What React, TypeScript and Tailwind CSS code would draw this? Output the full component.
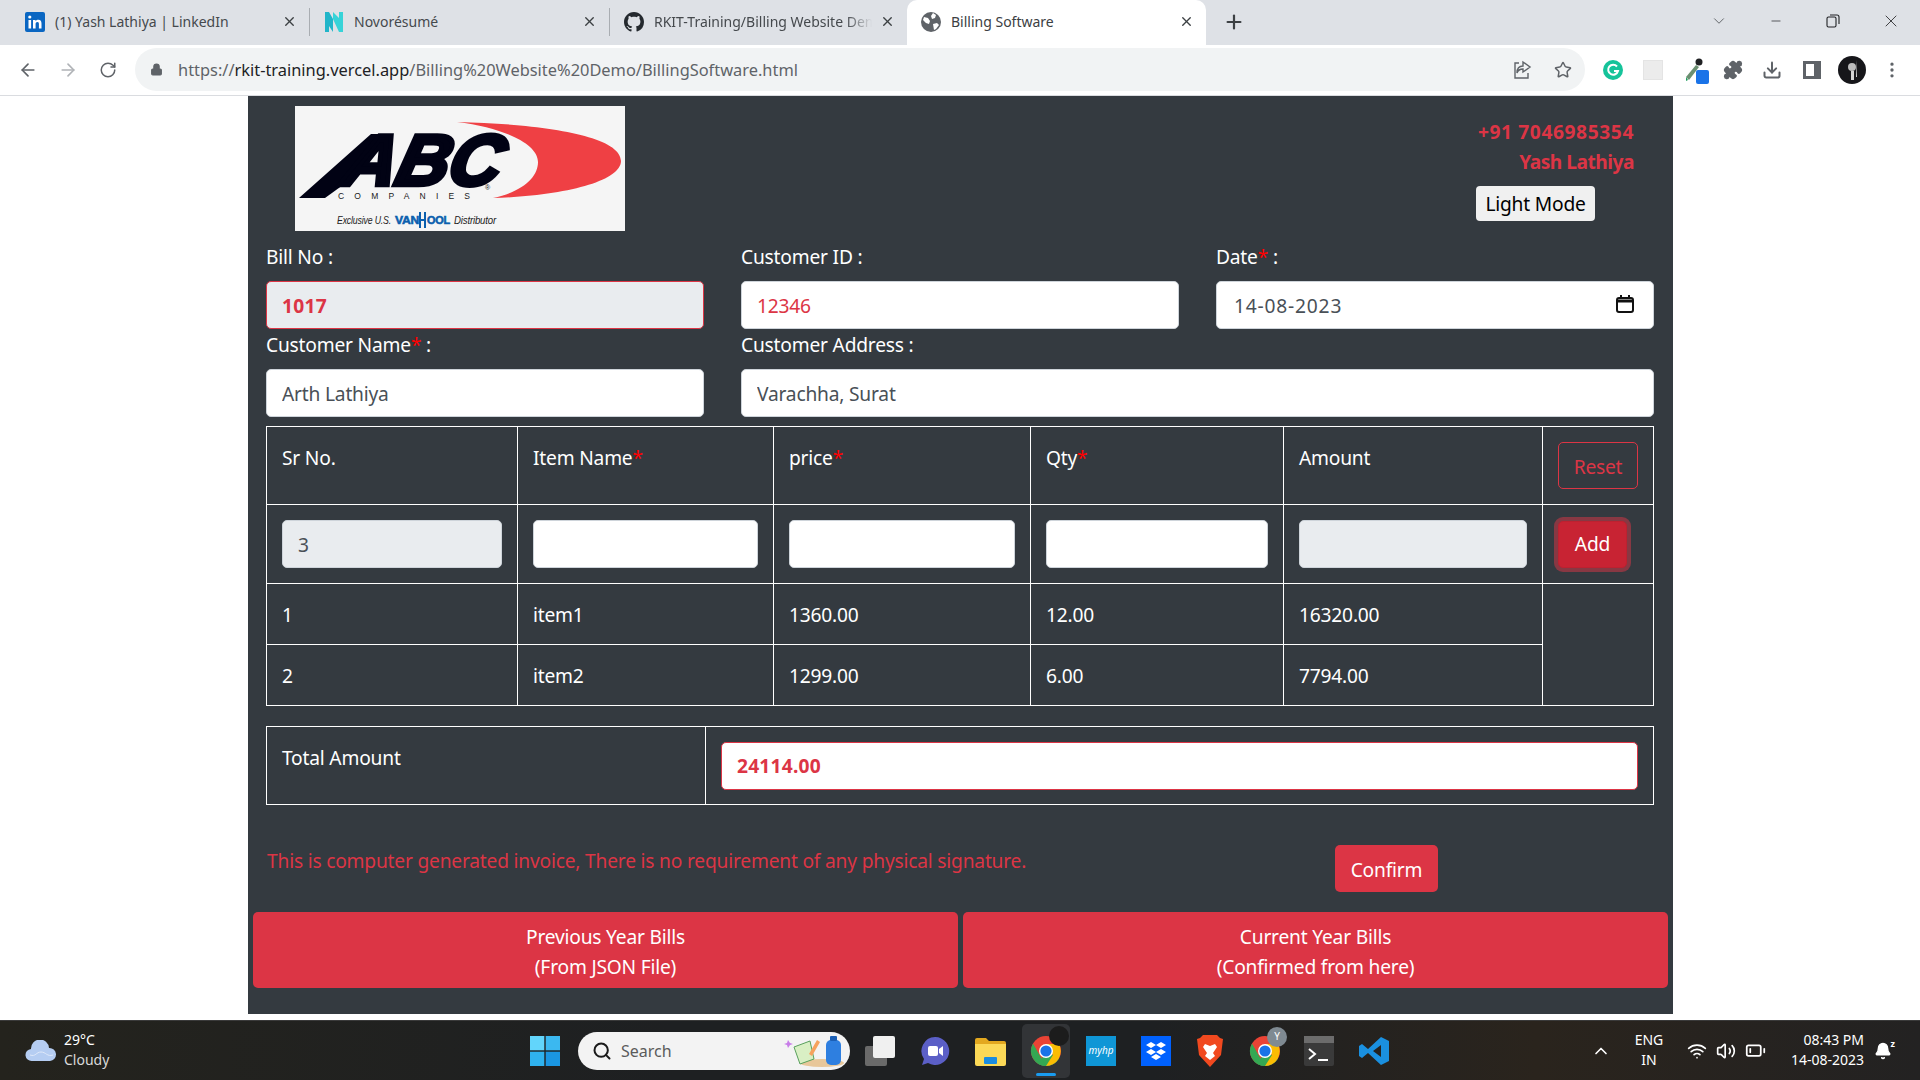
import React from 'react';
import { X, Plus, ArrowLeft, ArrowRight, RotateCw, Lock, Star, Puzzle, Download, EllipsisVertical, Minus, ChevronDown, ChevronUp, Search, Wifi, Volume2, BatteryLow, Bell } from 'lucide-react';

const FONT = "font-['Noto_Sans','Open_Sans',sans-serif]";

const inputClass = 'h-[48px] w-full rounded-[5px] border border-[#ced4da] bg-white px-[15px] text-[19.2px] text-[#495057] outline-none';

const Star2 = () => <span className="text-[#ff0000]">*</span>;

const Tab = ({ icon, title, width, active, divider, first, fade }: { icon: React.ReactNode; title: string; width: string; active?: boolean; divider?: boolean; first?: boolean; fade?: boolean }) => (
  <div className={`flex h-[45px] items-center pb-[2px] ${width} ${active ? 'rounded-t-[10px] bg-white text-[#3c4043]' : 'text-[#45494d]'}`}>
    <div className={`${first ? 'ml-[25px]' : 'ml-[14px]'} flex w-[30px] shrink-0 items-center`}>{icon}</div>
    <span className={`min-w-0 flex-1 overflow-hidden whitespace-nowrap text-[14px] ${fade ? '[mask-image:linear-gradient(to_right,black_88%,transparent)]' : ''}`}>{title}</span>
    <X size={15} strokeWidth={2.2} className="ml-[8px] mr-[12px] shrink-0 text-[#3c4043]" />
    {divider && <div className="h-[28px] w-px bg-[#a9adb2]" />}
  </div>
);

const ChromeIcon = ({ size = 32 }: { size?: number }) => (
  <svg width={size} height={size} viewBox="0 0 32 32">
    <circle cx="16" cy="16" r="15" fill="#ea4335" />
    <path d="M16 16 L29 23.5 A15 15 0 0 1 8.5 29 Z" fill="#34a853" />
    <path d="M16 9 L29 9 A15 15 0 0 1 16 31 L23 20 Z" fill="#fbbc04" />
    <path d="M3 8.5 L9.5 20 L16 31 A15 15 0 0 1 3 8.5 Z" fill="#34a853" />
    <circle cx="16" cy="16" r="7" fill="#fff" />
    <circle cx="16" cy="16" r="5.6" fill="#1a73e8" />
  </svg>
);

const Logo = () => (
  <svg width="330" height="125" viewBox="0 0 330 125" className="shrink-0 bg-[#f5f5f5]">
    <path d="M162 16 C250 18 326 30 326 55 C326 75 270 90 198 92 C230 85 243 70 243 56 C243 38 210 22 162 16 Z" fill="#ef4044" />
    <polygon points="4,92 30,92 66,66 96,28 76,28" fill="#010214" />
    <text x="46" y="79" transform="skewX(-14) translate(19 0)" fontFamily="Liberation Sans" fontWeight="700" fontStyle="italic" fontSize="72" fill="#010214" stroke="#010214" strokeWidth="4.500" textLength="157" lengthAdjust="spacingAndGlyphs">ABC</text>
    <text x="190" y="84" fontFamily="Liberation Sans" fontSize="7" fill="#1a1a22">®</text>
    <text x="43" y="93" fontFamily="Liberation Sans" fontSize="8.500" letterSpacing="10.200" fill="#1a1a22">COMPANIES</text>
    <text x="42" y="118" fontFamily="Liberation Sans" fontStyle="italic" fontSize="11" fill="#222" textLength="54" lengthAdjust="spacingAndGlyphs">Exclusive U.S.</text>
    <text x="100" y="118" fontFamily="Liberation Sans" fontWeight="700" fontSize="10" fill="#0b5fae" stroke="#0b5fae" strokeWidth="0.500" textLength="24" lengthAdjust="spacingAndGlyphs">VAN</text>
    <rect x="124" y="106" width="2" height="16" fill="#0b5fae" />
    <rect x="129" y="106" width="2" height="16" fill="#0b5fae" />
    <rect x="124" y="113" width="7" height="2" fill="#0b5fae" />
    <text x="132" y="118" fontFamily="Liberation Sans" fontWeight="700" fontSize="10" fill="#0b5fae" stroke="#0b5fae" strokeWidth="0.500" textLength="23" lengthAdjust="spacingAndGlyphs">OOL</text>
    <text x="159" y="118" fontFamily="Liberation Sans" fontStyle="italic" fontSize="11" fill="#222" textLength="42" lengthAdjust="spacingAndGlyphs">Distributor</text>
  </svg>
);

const thClass = 'border border-white px-[15px] pt-[17px] pb-0 align-top text-left font-normal';
const tdClass = 'border border-white px-[15px] align-middle';
const dataClass = 'border border-white px-[15px] pt-[2px] align-middle';

export default function App() {
  return (
    <div className={`flex h-[1080px] w-[1920px] flex-col overflow-hidden bg-white ${FONT}`}>
      {/* tab strip */}
      <div className="flex h-[45px] shrink-0 items-center bg-[#dee1e6]">
        <Tab width="w-[310px]" first divider title="(1) Yash Lathiya | LinkedIn" icon={
          <svg width="20" height="20" viewBox="0 0 20 20"><rect width="20" height="20" rx="2" fill="#0a66c2" /><rect x="3.5" y="8" width="2.6" height="8.5" fill="#fff" /><circle cx="4.8" cy="5" r="1.6" fill="#fff" /><path d="M8 8h2.5v1.2c.5-.8 1.5-1.4 2.8-1.4 2.400 0 3.200 1.500 3.200 3.800v4.900h-2.600v-4.300c0-1.200-.3-2.100-1.500-2.100s-1.800.9-1.800 2.100v4.300H8z" fill="#fff" /></svg>
        } />
        <Tab width="w-[300px]" divider title="Novorésumé" icon={
          <svg width="20" height="22" viewBox="0 0 20 22"><path d="M1 1h4l4 7v13L5 15v6H1z" fill="#21b5c9" /><path d="M19 1h-4v6L9 1v7l6 13h4z" fill="#37d3d8" /></svg>
        } />
        <Tab width="w-[297px]" fade title="RKIT-Training/Billing Website Demo" icon={
          <svg width="20" height="20" viewBox="0 0 16 16" fill="#24292e"><path d="M8 0C3.580 0 0 3.580 0 8c0 3.540 2.290 6.530 5.470 7.590.4.070.55-.17.55-.38 0-.19-.01-.82-.01-1.490-2.010.37-2.530-.49-2.690-.94-.09-.23-.48-.94-.82-1.130-.28-.15-.68-.52-.01-.53.63-.01 1.080.58 1.230.82.72 1.210 1.870.87 2.330.66.070-.52.28-.87.51-1.070-1.780-.2-3.640-.89-3.640-3.950 0-.87.31-1.590.82-2.150-.08-.2-.36-1.020.08-2.120 0 0 .67-.21 2.200.82.64-.18 1.320-.27 2-.27s1.360.09 2 .27c1.530-1.040 2.200-.82 2.200-.82.44 1.100.16 1.920.08 2.120.51.56.82 1.270.82 2.150 0 3.070-1.870 3.750-3.650 3.950.29.25.54.73.54 1.480 0 1.070-.01 1.930-.01 2.200 0 .21.15.46.55.38A8.010 8.010 0 0 0 16 8c0-4.420-3.580-8-8-8z" /></svg>
        } />
        <Tab width="w-[299px]" active title="Billing Software" icon={
          <svg width="20" height="20" viewBox="0 0 20 20"><circle cx="10" cy="10" r="10" fill="#5f6368" /><path d="M3 5l4 1 2 3-1 3-3-1-3-3zM12 1l3 2-1 3-3 1-1-3zM12 12l4-1 2 2-3 4-2 1z" fill="#fff" /></svg>
        } />
        <Plus size={22} strokeWidth={2.4} className="ml-[17px] -mt-[2px] text-[#3c4043]" />
        <ChevronDown size={18} strokeWidth={1} className="ml-[465px] -mt-[4px] text-[#3c4043]" />
        <Minus size={14} strokeWidth={1.2} className="ml-[41px] -mt-[4px] text-[#202124]" />
        <svg width="14" height="14" viewBox="0 0 14 14" fill="none" stroke="#202124" strokeWidth="1.1" className="ml-[43px] -mt-[4px]"><rect x="1" y="3" width="9" height="10" rx="1.5" /><path d="M4 1h7a2 2 0 0 1 2 2v7" /></svg>
        <X size={20} strokeWidth={1} className="ml-[41px] -mt-[4px] text-[#202124]" />
      </div>

      {/* toolbar */}
      <div className="flex h-[51px] shrink-0 items-center border-b border-[#dadce0] pb-[1px] text-[#5f6368]">
        <ArrowLeft size={20} className="ml-[18px] shrink-0" />
        <ArrowRight size={20} className="ml-[20px] shrink-0 text-[#b0b3b7]" />
        <RotateCw size={18} className="ml-[21px] shrink-0" />
        <div className="ml-[18px] flex h-[43px] w-[1450px] shrink-0 items-center rounded-full bg-[#f1f3f4]">
          <Lock size={13} fill="#5f6368" className="ml-[15px] shrink-0" />
          <span className="ml-[15px] whitespace-nowrap pt-[1px] text-[16.4px]">https://<span className="text-[#202124]">rkit-training.vercel.app</span>/Billing%20Website%20Demo/BillingSoftware.html</span>
          <svg width="19" height="20" viewBox="0 0 19 20" fill="none" stroke="#5f6368" strokeWidth="1.4" className="ml-auto"><path d="M6 3H2v15h13v-5" /><path d="M10 2l7 5-7 5V9c-3 0-5 1-6 4 0-4 2-7 6-7z" /></svg>
          <Star size={18} className="ml-[22px] mr-[13px]" />
        </div>
        <svg width="20" height="20" viewBox="0 0 20 20" className="ml-[18px] shrink-0"><circle cx="10" cy="10" r="10" fill="#15c39a" /><path d="M14 6.500A5 5 0 1 0 15 11h-4" fill="none" stroke="#fff" strokeWidth="2" /></svg>
        <div className="ml-[20px] h-[20px] w-[20px] shrink-0 border border-[#e4e4e4] bg-[#ececec]" />
        <svg width="26" height="28" viewBox="0 0 26 28" className="ml-[21px] shrink-0"><path d="M2 21L12 9l3 2L5 24z" fill="#6b8f71" /><path d="M2 21l2 3-2 1z" fill="#1b9c5b" /><circle cx="15" cy="6" r="3.500" fill="#202124" /><rect x="12" y="14" width="13" height="14" rx="2" fill="#1a73e8" /></svg>
        <Puzzle size={20} fill="#5f6368" className="ml-[13px] shrink-0" />
        <Download size={20} className="ml-[19px] shrink-0" strokeWidth={2.4} />
        <svg width="18" height="18" viewBox="0 0 18 18" className="ml-[21px] shrink-0"><path d="M0 0h18v18H0zM3 3v12h8V3z" fill="#5f6368" fillRule="evenodd" /></svg>
        <svg width="28" height="28" viewBox="0 0 28 28" className="ml-[17px] shrink-0"><circle cx="14" cy="14" r="14" fill="#16161a" /><circle cx="14" cy="11" r="4" fill="#bcbcbc" /><path d="M13 15h3v9h-3zM18 4l1 17h-1z" fill="#d5d5d5" /></svg>
        <EllipsisVertical size={20} className="ml-[16px] shrink-0" />
      </div>

      {/* page */}
      <div className="min-h-0 flex-1">
        <div className="ml-[248px] w-[1425px] bg-[#343a40] pl-[18px] pr-[19px] pt-[10px] pb-[26px] text-[19.2px] tracking-[-0.2px] text-white">
          <div className="flex h-[125px] justify-between">
            <div className="ml-[29px]"><Logo /></div>
            <div className="mr-[20px] flex flex-col items-end pt-[11px] font-bold leading-[30px] text-[#dc3545]">
              <span className="tracking-[0.6px]">+91 7046985354</span>
              <span className="tracking-[-0.5px]">Yash Lathiya</span>
              <button className="mr-[39px] mt-[9px] h-[35px] w-[119px] rounded-[4px] bg-[#f0f0f0] text-[19.2px] font-normal text-black">Light Mode</button>
            </div>
          </div>

          <div className="mt-[11px] grid grid-cols-3 gap-x-[37px]">
            <div>
              <div className="mb-[10px] h-[29px] leading-[29px]">Bill No :</div>
              <input readOnly value="1017" className="h-[48px] w-full rounded-[5px] border border-[#dc3545] bg-[#e9ecef] px-[15px] font-bold tracking-[0.3px] text-[#dc3545] outline-none" />
            </div>
            <div>
              <div className="mb-[10px] h-[29px] leading-[29px]">Customer ID :</div>
              <input readOnly value="12346" className={`${inputClass} !text-[#dc3545]`} />
            </div>
            <div>
              <div className="mb-[10px] h-[29px] leading-[29px]">Date<Star2 /> :</div>
              <div className="relative">
                <input readOnly value="14-08-2023" className={`${inputClass} !px-[17px] !tracking-[0.8px]`} />
                <svg width="18" height="18" viewBox="0 0 18 18" fill="none" stroke="#111" className="absolute right-[20px] top-[14px]"><rect x="1" y="3" width="16" height="14" rx="2" strokeWidth="2" /><path d="M1 6h16" strokeWidth="3" /><path d="M5 0v3M13 0v3" strokeWidth="2" /></svg>
              </div>
            </div>
            <div className="mt-[1px]">
              <div className="mb-[10px] h-[29px] leading-[29px]">Customer Name<Star2 /> :</div>
              <input readOnly value="Arth Lathiya" className={inputClass} />
            </div>
            <div className="col-span-2 mt-[1px]">
              <div className="mb-[10px] h-[29px] leading-[29px]">Customer Address :</div>
              <input readOnly value="Varachha, Surat" className={inputClass} />
            </div>
          </div>

          <table className="mt-[9px] w-full table-fixed border-collapse">
            <colgroup>
              <col className="w-[251px]" />
              <col className="w-[256px]" />
              <col className="w-[257px]" />
              <col className="w-[253px]" />
              <col className="w-[259px]" />
              <col />
            </colgroup>
            <tbody>
              <tr className="h-[78px]">
                <th className={thClass}>Sr No.</th>
                <th className={thClass}>Item Name<Star2 /></th>
                <th className={thClass}>price<Star2 /></th>
                <th className={thClass}>Qty<Star2 /></th>
                <th className={thClass}>Amount</th>
                <td className={tdClass}>
                  <button className="h-[47px] w-[80px] rounded-[5px] border border-[#dc3545] pt-[4px] text-[#dc3545]">Reset</button>
                </td>
              </tr>
              <tr className="h-[79px]">
                <td className={tdClass}><input readOnly value="3" className={`${inputClass} !bg-[#e9ecef]`} /></td>
                <td className={tdClass}><input readOnly className={inputClass} /></td>
                <td className={tdClass}><input readOnly className={inputClass} /></td>
                <td className={tdClass}><input readOnly className={inputClass} /></td>
                <td className={tdClass}><input readOnly className={`${inputClass} !bg-[#e9ecef]`} /></td>
                <td className={tdClass}>
                  <button className="h-[47px] w-[69px] rounded-[5px] border border-[#bd2130] bg-[#c82333] pt-[1px] text-white shadow-[0_0_0_4px_rgba(220,53,69,0.5)]">Add</button>
                </td>
              </tr>
              <tr className="h-[61px]">
                <td className={dataClass}>1</td>
                <td className={dataClass}>item1</td>
                <td className={dataClass}>1360.00</td>
                <td className={dataClass}>12.00</td>
                <td className={dataClass}>16320.00</td>
                <td rowSpan={2} className={tdClass} />
              </tr>
              <tr className="h-[61px]">
                <td className={dataClass}>2</td>
                <td className={dataClass}>item2</td>
                <td className={dataClass}>1299.00</td>
                <td className={dataClass}>6.00</td>
                <td className={dataClass}>7794.00</td>
              </tr>
            </tbody>
          </table>

          <table className="mt-[20px] w-full table-fixed border-collapse">
            <tbody>
              <tr className="h-[78px]">
                <th className={`${thClass} w-[439px]`}>Total Amount</th>
                <td className={tdClass}>
                  <input readOnly value="24114.00" className="h-[48px] w-full rounded-[5px] border border-[#dc3545] bg-white px-[15px] font-bold tracking-[0.2px] text-[#dc3545] outline-none" />
                </td>
              </tr>
            </tbody>
          </table>

          <div className="mt-[40px] flex items-start justify-between">
            <p className="ml-[1px] pt-[2px] text-[#dc3545]">This is computer generated invoice, There is no requirement of any physical signature.</p>
            <button className="mr-[216px] h-[47px] w-[103px] rounded-[5px] bg-[#dc3545] pt-[4px] text-white">Confirm</button>
          </div>

          <div className="ml-[-13px] mr-[-14px] mt-[20px] flex gap-[5px]">
            <button className="h-[76px] flex-1 rounded-[5px] bg-[#dc3545] pt-[4px] leading-[30px] text-white">Previous Year Bills<br />(From JSON File)</button>
            <button className="h-[76px] flex-1 rounded-[5px] bg-[#dc3545] pt-[4px] leading-[30px] text-white">Current Year Bills<br />(Confirmed from here)</button>
          </div>
        </div>
      </div>

      {/* taskbar */}
      <div className="flex h-[60px] shrink-0 items-center border-t border-[#3a3a3a] bg-[linear-gradient(90deg,#24231d,#1e2022_35%,#1e2022_60%,#2a241d_80%,#232222)] text-white">
        <svg width="32" height="22" viewBox="0 0 32 22" className="ml-[25px] shrink-0"><path d="M7 21a6 6 0 0 1-1-12 9 9 0 0 1 18-1 6.500 6.500 0 0 1 1 13z" fill="#b5cdf2" /><path d="M5 15c6 2 6-3 11-3s6 5 12 3" fill="none" stroke="#dfe9fa" strokeWidth="1" /></svg>
        <div className="ml-[7px] -mt-[2px] w-[100px] shrink-0 text-[14px] leading-[20px]">
          <div>29°C</div>
          <div className="text-[#d9d9d9]">Cloudy</div>
        </div>
        <svg width="30" height="30" viewBox="0 0 30 30" className="ml-[366px] shrink-0"><rect width="14.300" height="14.300" fill="#62d5fb" /><rect x="15.700" width="14.300" height="14.300" fill="#3bb8f0" /><rect y="15.700" width="14.300" height="14.300" fill="#2fb2ee" /><rect x="15.700" y="15.700" width="14.300" height="14.300" fill="#1a96e2" /></svg>
        <div className="ml-[18px] flex h-[38px] w-[272px] shrink-0 items-center rounded-full bg-[#f3f3f3] text-[#5b5b5b]">
          <Search size={20} strokeWidth={2.4} className="ml-[14px] text-[#1a1a1a]" />
          <span className="ml-[9px] text-[16px]">Search</span>
          <svg width="66" height="34" viewBox="0 0 66 34" className="ml-auto mr-[2px]"><ellipse cx="40" cy="29" rx="22" ry="4" fill="#e8c79a" /><path d="M12 13l16-6 4 18-14 5z" fill="#d9efc4" stroke="#58a05c" /><path d="M27 20l8-14 3 2-8 14z" fill="#f6a25e" /><rect x="44" y="6" width="15" height="25" rx="5" fill="#2e7fe0" /><rect x="48" y="2" width="7" height="5" rx="1" fill="#1b5fb5" /><path d="M6 6l2 3 3 1-3 1-2 3-1-3-3-1 3-1z" fill="#c77ce8" /></svg>
        </div>
        <svg width="30" height="30" viewBox="0 0 30 30" className="ml-[15px] shrink-0"><rect y="10" width="22" height="20" rx="2" fill="#6a6a6a" /><rect x="8" width="22" height="22" rx="2" fill="#f0f0f0" /></svg>
        <svg width="30" height="30" viewBox="0 0 30 30" className="ml-[25px] shrink-0"><path d="M15 1a14 14 0 1 1-7 26l-6 2 2-6A14 14 0 0 1 15 1z" fill="#5b5fc7" /><rect x="8" y="10" width="10" height="10" rx="2" fill="#fff" /><path d="M19 13l4-3v10l-4-3z" fill="#fff" /></svg>
        <svg width="31" height="30" viewBox="0 0 31 30" className="ml-[25px] shrink-0"><path d="M0 4a2 2 0 0 1 2-2h9l3 3h15a2 2 0 0 1 2 2v3H0z" fill="#e3a81f" /><path d="M0 8h31v20a2 2 0 0 1-2 2H2a2 2 0 0 1-2-2z" fill="#fcd957" /><rect x="9" y="21" width="13" height="7" rx="1" fill="#1a8ce0" /></svg>
        <div className="relative ml-[16px] flex h-[54px] w-[48px] shrink-0 items-center justify-center rounded-[5px] bg-[#323437]">
          <ChromeIcon />
          <div className="absolute right-[1px] top-[2px] h-[20px] w-[20px] rounded-full bg-[#1c1c1c]" />
          <div className="absolute bottom-[2px] left-[14px] h-[3px] w-[20px] rounded-full bg-[#1a9cf0]" />
        </div>
        <div className="ml-[16px] flex h-[30px] w-[30px] shrink-0 items-center justify-center bg-[#0f96d6] text-[10px] italic text-white">myhp</div>
        <div className="ml-[25px] flex h-[30px] w-[30px] shrink-0 items-center justify-center bg-[#0061fe]">
          <svg width="20" height="18" viewBox="0 0 20 18" fill="#fff"><path d="M5 0l5 3-5 3-5-3zM15 0l5 3-5 3-5-3zM5 7l5 3-5 3-5-3zM15 7l5 3-5 3-5-3zM10 12l5 3-5 3-5-3z" /></svg>
        </div>
        <svg width="26" height="32" viewBox="0 0 26 32" className="ml-[26px] shrink-0"><path d="M6 0h14l3 3 3 1-2 16-11 12L2 20 0 4l3-1z" fill="#f1491f" /><path d="M8 9l5 2 5-2 2 3-4 6 2 3-5 4-5-4 2-3-4-6z" fill="#fff" /></svg>
        <div className="relative ml-[26px] shrink-0">
          <ChromeIcon />
          <div className="absolute -right-[6px] -top-[8px] flex h-[20px] w-[20px] items-center justify-center rounded-full bg-[#7f8a92] text-[10px]">Y</div>
        </div>
        <svg width="30" height="30" viewBox="0 0 30 30" className="ml-[23px] shrink-0"><rect width="30" height="30" rx="2" fill="#3a3a3a" /><rect width="30" height="7" fill="#6c6c6c" /><path d="M5 13l6 5-6 5" fill="none" stroke="#fff" strokeWidth="2" /><path d="M14 24h10" stroke="#fff" strokeWidth="2" /></svg>
        <svg width="30" height="30" viewBox="0 0 30 30" className="ml-[25px] shrink-0"><path d="M22 1l8 4v20l-8 4-13-12-6 5-3-2v-10l3-2 6 5zM22 9l-8 6 8 6z" fill="#1a90e0" fillRule="evenodd" /></svg>
        <ChevronUp size={20} strokeWidth={2} className="ml-[202px] shrink-0" />
        <div className="ml-[20px] -mt-[2px] w-[36px] shrink-0 text-center text-[14px] leading-[20px]">ENG<br />IN</div>
        <Wifi size={20} className="ml-[20px] shrink-0" />
        <Volume2 size={20} className="ml-[9px] shrink-0" />
        <BatteryLow size={21} className="ml-[9px] shrink-0" />
        <div className="ml-[20px] -mt-[2px] w-[78px] shrink-0 text-right text-[14px] leading-[20px]">08:43 PM<br />14-08-2023</div>
        <div className="relative ml-[10px] shrink-0">
          <Bell size={18} fill="#fff" />
          <span className="absolute -right-[3px] -top-[5px] text-[9px] font-bold">z</span>
        </div>
      </div>
    </div>
  );
}
